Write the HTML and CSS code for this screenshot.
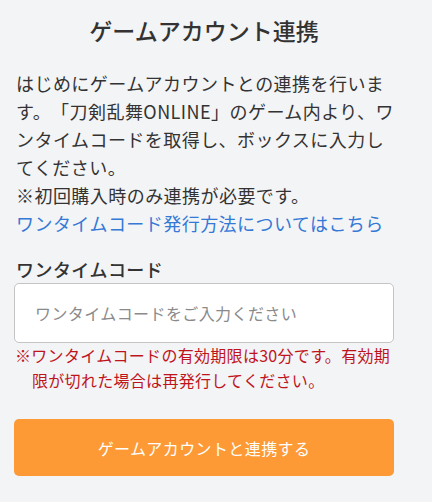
FILE: index.html
```html
<!DOCTYPE html>
<html lang="ja">
<head>
  <meta charset="UTF-8">
  <meta name="viewport" content="width=device-width, initial-scale=1.0">
  <title>ゲームアカウント連携</title>
  <link rel="stylesheet" href="styles.css">
</head>
<body>
  <div class="link-page">
    <h1 class="page-title">ゲームアカウント連携</h1>

    <p class="intro">はじめにゲームアカウントとの連携を行います。「刀剣乱舞ONLINE」のゲーム内より、ワンタイムコードを取得し、ボックスに入力してください。</p>
    <p class="intro">※初回購入時のみ連携が必要です。</p>
    <a class="help-link" href="#">ワンタイムコード発行方法についてはこちら</a>

    <div class="field">
      <label class="field-label" for="codeInput">ワンタイムコード</label>
      <input type="text" id="codeInput" class="code-input" placeholder="ワンタイムコードをご入力ください">
      <p class="note">※ワンタイムコードの有効期限は30分です。有効期限が切れた場合は再発行してください。</p>
    </div>

    <button class="submit-button">ゲームアカウントと連携する</button>
  </div>
</body>
</html>
```

FILE: styles.css
```css
body {
  margin: 0;
  background: #f3f4f6;
  font-family: "Noto Sans CJK JP", "Noto Sans", sans-serif;
  color: #333;
  text-spacing-trim: space-all;
}

.link-page {
  width: 380px;
  padding: 0 0 0 14px;
}

.page-title {
  margin: 0;
  padding-top: 14px;
  height: 48px;
  font-size: 23px;
  font-weight: 500;
  line-height: 32px;
  text-align: center;
  letter-spacing: 0;
  box-sizing: border-box;
}

.intro {
  margin: 0;
  padding-left: 2px;
  font-size: 18px;
  line-height: 28px;
  letter-spacing: 0.45px;
}

.intro:first-of-type {
  margin-top: 21px;
}

.help-link {
  display: block;
  padding-left: 2px;
  font-size: 18px;
  line-height: 28px;
  letter-spacing: 0.45px;
  color: #3479d6;
  text-decoration: none;
}

.field {
  margin-top: 18px;
}

.field-label {
  display: block;
  padding-left: 2px;
  font-size: 18px;
  font-weight: 500;
  line-height: 28px;
  letter-spacing: 0.45px;
}

.code-input {
  display: block;
  box-sizing: border-box;
  width: 380px;
  height: 60px;
  margin-top: 0;
  padding: 0 20px;
  border: 1px solid #c4c4c4;
  border-radius: 5px;
  background: #fff;
  font-family: inherit;
  font-size: 16px;
  color: #333;
}

.code-input::placeholder {
  color: #8a8a8a;
  letter-spacing: 0.4px;
}

.note {
  margin: 0;
  padding-left: 18px;
  text-indent: -17px;
  font-size: 16px;
  line-height: 25px;
  letter-spacing: 0.3px;
  color: #c0141c;
}

.submit-button {
  display: block;
  width: 380px;
  height: 57px;
  margin-top: 26px;
  border: none;
  border-radius: 5px;
  background: #fd9a35;
  color: #fff;
  font-family: inherit;
  font-size: 16px;
  letter-spacing: 0.4px;
}
```
